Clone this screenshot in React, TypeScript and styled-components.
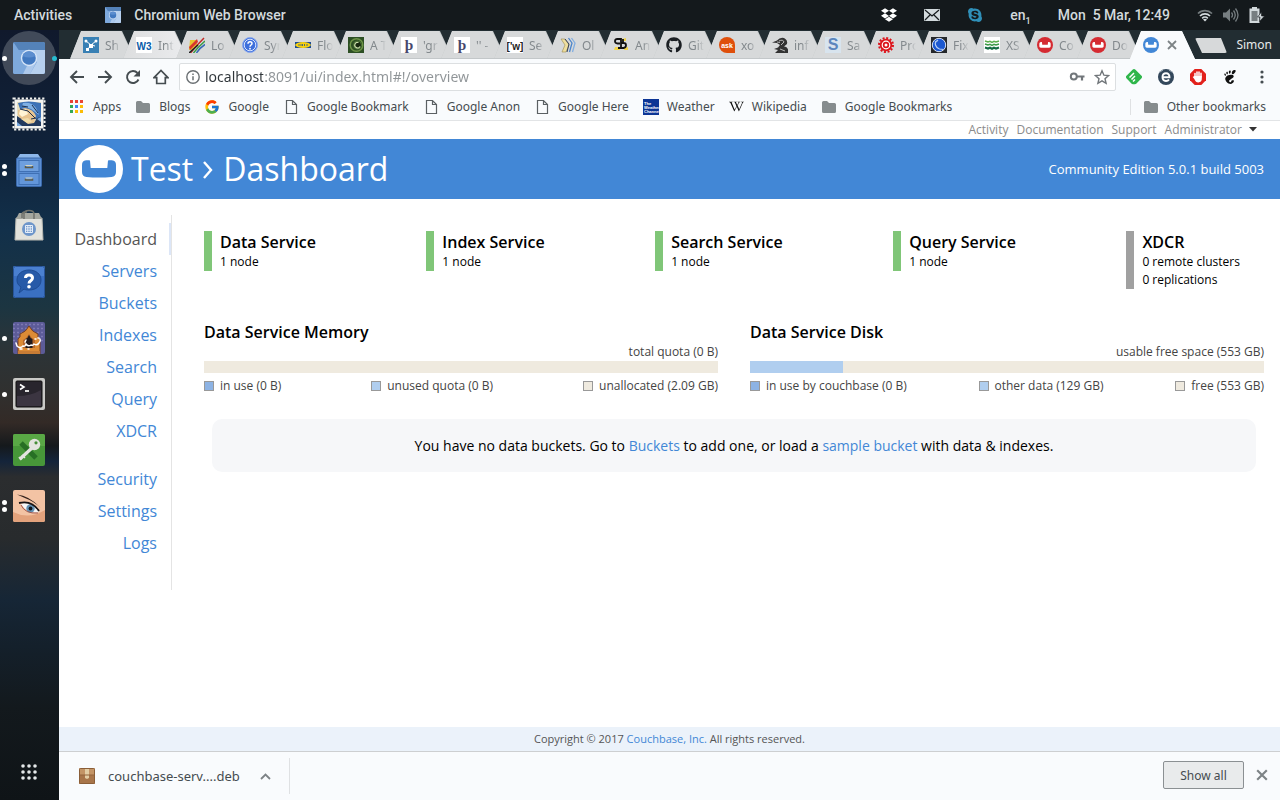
import React from "react";
import styled, { createGlobalStyle, css } from "styled-components";
import { FaDropbox, FaGithub, FaSkype, FaWikipediaW } from "react-icons/fa";
import { FcGoogle } from "react-icons/fc";
import { SiGnome } from "react-icons/si";

const ui = '"Noto Sans", "Open Sans", sans-serif';
const page = '"Open Sans", "Noto Sans", sans-serif';
const blue = "#4287d6";

const GlobalStyle = createGlobalStyle`
  *, *::before { box-sizing: border-box; }
  body { margin: 0; background: #fff; }
  button { border: 0; padding: 0; background: none; font: inherit; color: inherit; cursor: pointer; }
  a { color: inherit; text-decoration: none; }
  h1, h2, p, ul { margin: 0; padding: 0; }
  ul { list-style: none; }
  svg { display: block; flex: none; }
`;

/* ---------- desktop ---------- */

const Desktop = styled.div`
  display: flex;
  flex-direction: column;
  min-height: 100vh;
  font-family: ${ui};
`;

const TopBar = styled.header`
  display: flex;
  align-items: center;
  height: 30px;
  padding: 0 15px 0 14px;
  background: #14191c;
  color: #d3dadd;
  font: 500 14px/30px Roboto, sans-serif;
  white-space: nowrap;
`;

const AppMenu = styled.button`
  display: flex;
  align-items: center;
  gap: 13px;
  margin-left: 33px;
`;

const Tray = styled.div`
  display: flex;
  align-items: center;
  gap: 27px;
  margin-left: auto;
`;

const Status = styled.button`
  display: flex;
  gap: 10px;
`;

const Sub = styled.sub`
  font-size: 9px;
  line-height: 8px;
`;

const Below = styled.div`
  display: flex;
  flex: 1;
`;

const Dock = styled.nav`
  display: flex;
  flex: none;
  flex-direction: column;
  width: 59px;
  background: linear-gradient(
    #10192c 0%, #10233b 16%, #12304a 26%, #1c3541 36%, #2b3438 41%, #30302f 47%,
    #332a26 51%, #15191c 54%, #14243a 56%, #2b2d2f 58%, #282b2d 66%, #162636 74%,
    #14202b 80%, #13191d 88%, #0f1417 100%
  );
`;

const DockButton = styled.button<{ $last?: boolean }>`
  position: relative;
  display: flex;
  align-items: center;
  justify-content: center;
  height: 56px;
  margin-top: ${(p) => (p.$last ? "auto" : "0")};
  padding-right: 2px;
`;

const Halo = styled.span`
  display: flex;
  align-items: center;
  justify-content: center;
  width: 54px;
  height: 54px;
  border-radius: 50%;
  background: #414a59;
`;

const Dots = styled.span<{ $side?: "right" }>`
  position: absolute;
  top: 0;
  bottom: 0;
  ${(p) => (p.$side === "right" ? "right: 2px;" : "left: 2px;")}
  display: flex;
  flex-direction: column;
  justify-content: center;
  gap: 2px;
`;

const Dot = styled.i<{ $cyan?: boolean }>`
  width: 5px;
  height: 5px;
  border-radius: 50%;
  background: ${(p) => (p.$cyan ? "#27bcd0" : "#fff")};
`;

/* ---------- browser ---------- */

const Browser = styled.div`
  display: flex;
  flex: 1;
  flex-direction: column;
  min-width: 0;
`;

const TabStrip = styled.div`
  display: flex;
  align-items: flex-end;
  height: 29px;
  padding: 0 8px 0 11px;
  background: #222d32;
`;

const slant = css`
  clip-path: polygon(0 100%, 11px 0, calc(100% - 13px) 0, 100% 100%);
`;

const Tab = styled.button<{ $state: "idle" | "hover" | "active" }>`
  position: relative;
  display: flex;
  flex: none;
  align-items: center;
  gap: ${(p) => (p.$state === "active" ? 8 : 6)}px;
  width: 65px;
  height: 28px;
  margin-right: -12px;
  padding-left: 13px;
  color: #83898d;
  font-size: 12px;
  ${slant}
  background: ${(p) => (p.$state === "active" ? "#f9fbfd" : "#c3c7c9")};
  z-index: ${(p) => (p.$state === "active" ? 2 : 1)};

  &::before {
    content: "";
    position: absolute;
    inset: 0 1px 1px 0;
    ${slant}
    background: ${(p) =>
      p.$state === "active" ? "#f9fbfd" : p.$state === "hover" ? "linear-gradient(90deg, #dddedf, #ebecee)" : "#d7d9da"};
    ${(p) => p.$state === "active" && "inset: 0;"}
  }

  > * { position: relative; }
`;

const TabTitle = styled.span`
  width: 16px;
  overflow: hidden;
  white-space: nowrap;
  text-align: left;
  mask-image: linear-gradient(90deg, #000 50%, transparent);
`;

const NewTab = styled.button`
  width: 32px;
  height: 15px;
  margin: 0 auto 6px 12px;
  background: #d7d9da;
  border-radius: 2px;
  clip-path: polygon(0 0, 26px 0, 100% 100%, 7px 100%);
`;

const Profile = styled.button`
  align-self: center;
  color: #e6e9ea;
  font-size: 12px;
`;

const Toolbar = styled.div`
  display: flex;
  align-items: center;
  height: 35px;
  padding: 1px 10px 0 10px;
  background: #f9fbfd;
`;

const ToolButton = styled.button<{ $wide?: boolean }>`
  display: flex;
  flex: none;
  justify-content: center;
  width: ${(p) => (p.$wide ? 32 : 28)}px;
  color: #454c50;
`;

const Tools = styled.div<{ $end?: boolean }>`
  display: flex;
  align-items: center;
  margin: ${(p) => (p.$end ? "0 -8px 0 2px" : "0 4px 0 -6px")};
`;

const Omnibox = styled.label`
  display: flex;
  flex: 1;
  align-items: center;
  gap: 4px;
  height: 28px;
  padding: 0 5px;
  border: 1px solid #dcdfe1;
  border-radius: 2px;
  background: #fff;
`;

const Url = styled.input`
  flex: 1;
  min-width: 0;
  padding: 0;
  border: 0;
  outline: 0;
  font: 14px/20px ${ui};
  color: transparent;
  background: linear-gradient(90deg, #30363a 58px, #8f9497 58px);
  background-clip: text;
`;

const OmniButton = styled.button`
  margin-left: 5px;
  color: #71767a;
`;

const Bookmarks = styled.div`
  display: flex;
  align-items: center;
  gap: 14px;
  height: 27px;
  padding: 0 14px 1px 10px;
  border-bottom: 1px solid #e2e4e6;
  background: #f9fbfd;
`;

const Bookmark = styled.a<{ $end?: boolean }>`
  display: flex;
  align-items: center;
  gap: 8px;
  color: #454c50;
  font-size: 12px;
  line-height: 16px;
  white-space: nowrap;
  ${(p) =>
    p.$end &&
    css`
      margin-left: auto;
      padding-left: 12px;
      border-left: 1px solid #dfe1e3;
    `}
`;

/* ---------- console ---------- */

const Console = styled.div`
  display: flex;
  flex: 1;
  flex-direction: column;
  background: #fff;
  color: #000;
  font-family: ${page};
`;

const UserLinks = styled.nav`
  display: flex;
  align-items: flex-start;
  justify-content: flex-end;
  gap: 8px;
  height: 18px;
  padding-right: 23px;
  color: #8b8b8b;
  font-size: 12px;
  line-height: 17px;
`;

const UserMenu = styled.button`
  display: flex;
  align-items: center;
  gap: 7px;
`;

const Banner = styled.header`
  display: flex;
  align-items: center;
  height: 60px;
  padding: 0 16px;
  background: ${blue};
  color: #fff;
`;

const Title = styled.h1`
  display: flex;
  align-items: center;
  gap: 9px;
  margin-left: 8px;
  font-size: 32px;
  font-weight: 400;
  line-height: 48px;
`;

const Version = styled.span`
  margin-left: auto;
  font-size: 13px;
`;

const Body = styled.div`
  display: flex;
  flex: 1;
  align-items: flex-start;
`;

const SideNav = styled.nav`
  display: flex;
  flex: none;
  flex-direction: column;
  width: 113px;
  margin-top: 16px;
  padding: 8px 0 31px;
  border-right: 1px solid #e4e4e4;
`;

const SideGroup = styled.ul`
  & + & { margin-top: 16px; }
`;

const SideLink = styled.a<{ $active?: boolean }>`
  display: block;
  padding-right: ${(p) => (p.$active ? 12 : 14)}px;
  border-right: ${(p) => (p.$active ? "2px solid #dce6f7" : "0")};
  color: ${(p) => (p.$active ? "#555" : blue)};
  font-size: 16px;
  line-height: 32px;
  text-align: right;
`;

const Main = styled.main`
  flex: 1;
  min-width: 0;
  padding: 32px 16px 32px 32px;
`;

const Services = styled.section`
  display: flex;
  align-items: flex-start;
  justify-content: space-between;
  padding-right: 24px;
`;

const Service = styled.div<{ $off?: boolean }>`
  padding-left: 8px;
  border-left: 8px solid ${(p) => (p.$off ? "#a0a0a0" : "#80c678")};
  font-size: 12px;
  line-height: 18px;
`;

const Heading = styled.h2`
  font-size: 16px;
  font-weight: 600;
  line-height: 22px;
`;

const Usages = styled.section`
  display: grid;
  grid-template-columns: 1fr 1fr;
  gap: 32px;
  margin-top: 32px;
`;

const Total = styled.p`
  color: #444;
  font-size: 12px;
  line-height: 18px;
  text-align: right;
`;

const Meter = styled.div`
  height: 12px;
  background: #efeadf;
`;

const Fill = styled.div`
  height: 100%;
  background: #b0ceef;
`;

const Legend = styled.ul`
  display: flex;
  justify-content: space-between;
  padding-top: 4px;
  color: #444;
  font-size: 12px;
  line-height: 18px;
`;

const Key = styled.li<{ $color: string }>`
  display: flex;
  align-items: center;
  gap: 6px;

  &::before {
    content: "";
    width: 10px;
    height: 10px;
    border: 1px solid #999;
    background: ${(p) => p.$color};
  }
`;

const Notice = styled.p`
  margin: 24px 8px 0;
  padding: 16px;
  border-radius: 10px;
  background: #f6f7f9;
  font-size: 14px;
  line-height: 21px;
  text-align: center;
`;

const Link = styled.a`
  color: ${blue};
`;

const Footer = styled.footer`
  height: 24px;
  background: #ebf2fa;
  color: #555;
  font-size: 11px;
  line-height: 24px;
  text-align: center;
`;

/* ---------- download shelf ---------- */

const Shelf = styled.div`
  display: flex;
  align-items: center;
  height: 49px;
  padding: 0 12px 0 20px;
  border-top: 1px solid #cdcfd1;
  background: #f9fbfd;
  color: #454c50;
`;

const Download = styled.div`
  display: flex;
  align-items: center;
  gap: 20px;
  height: 36px;
  padding-right: 18px;
  border-right: 1px solid #dfe1e3;
`;

const FileButton = styled.button`
  display: flex;
  align-items: center;
  gap: 13px;
  font-size: 13px;
`;

const ShowAll = styled.button`
  width: 81px;
  height: 28px;
  margin: 0 12px 2px auto;
  border: 1px solid #8b9093;
  border-radius: 2px;
  background: #e9ebec;
  font-size: 12px;
`;

const CloseShelf = styled.button`
  margin-bottom: 2px;
`;

/* ---------- drawings ---------- */

const Svg = ({ s = 16, v = 16, children }: { s?: number; v?: number; children: React.ReactNode }) => (
  <svg width={s} height={s} viewBox={`0 0 ${v} ${v}`} fill="none" aria-hidden="true">
    {children}
  </svg>
);

const Chromium = ({ s }: { s: number }) => (
  <Svg s={s} v={32}>
    <rect width="32" height="32" rx="2" fill="#79a5dc" />
    <path d="M2 0H30Q32 0 32 2V8H0V2Q0 0 2 0Z" fill="#5482b9" />
    <path d="M0 3Q0 1 1 1L9 13l8 19H2Q0 32 0 30Z" fill="#7ea9dc" />
    <path d="M16 8H32V30Q32 32 30 32H17L24 20Z" fill="#b7d0ee" />
    <path d="M24 19 17 32H10L14 24Z" fill="#cfe0f5" opacity=".6" />
    <circle cx="16" cy="16" r="8.200" fill="#d6e5f8" />
    <circle cx="16" cy="16" r="6.800" fill="#4279c0" />
    <path d="M9.500 14a7 7 0 0 1 13 0q-6.500 3-13 0Z" fill="#5c8ecf" />
  </Svg>
);

const CouchLogo = ({ s, bg, fg }: { s: number; bg: string; fg: string }) => (
  <Svg s={s} v={48}>
    <circle cx="24" cy="24" r="24" fill={bg} />
    <path
      d="M10 15.500c2-.4 3.700-.4 5 0l.7 7.500h16.600l.7-7.500c1.300-.4 3-.4 5 0 2 .4 3 2 3 4.500v7c0 3-1.500 4.600-4.500 5-8 .7-17 .7-25 0-3-.4-4.500-2-4.500-5v-7c0-2.500 1-4.100 3-4.500Z"
      fill={fg}
    />
  </Svg>
);

const Stamp = () => (
  <Svg s={34} v={34}>
    <rect x="2.500" y="2.500" width="29" height="29" fill="#f3f3f0" />
    <rect x="1.500" y="1.500" width="31" height="31" stroke="#f3f3f0" strokeWidth="2" strokeDasharray="2.200 1.900" />
    <rect x="5" y="5" width="24" height="24" fill="#e6dfc0" />
    <path d="M6 6q10-3 23 0v18l-6-2-3-7-12-3Z" fill="#3d72b6" />
    <path d="M11 6q9-1 13 5l3 7-8-6-9-3Z" fill="#7fb0e4" />
    <path d="m6 13 7-2q8 1 11 8l-2 7-6 1-7-4-3-5Z" fill="#e8c590" />
    <path d="m8 13 6-1 2 5-6 3-3-3Z" fill="#fff4d4" />
    <path d="m5 19 6 4 5 4 6-1 3-5 4-1v9H5Z" fill="#223a5e" />
    <path d="m9 22 6 4 5-1-4-4Z" fill="#f0dca8" />
    <path d="m8 12 8 2 7 7M20 8l6 8M10 9l6 1m3 12 5-1" stroke="#1c2f4d" />
    <path d="m5 25 5 4H5Zm20-3 4-2v5Z" fill="#7aa9dc" />
  </Svg>
);

const Cabinet = () => (
  <Svg s={34} v={34}>
    <path d="M5 5.500 8 1h18l3 4.500Z" fill="#8db7ea" />
    <rect x="4.500" y="5" width="25" height="28.500" rx="1" fill="#5b8ed3" stroke="#3a68aa" />
    <rect x="7" y="7.500" width="20" height="11" fill="#6e9fde" stroke="#3f70b4" />
    <rect x="7" y="20.500" width="20" height="11" fill="#6396da" stroke="#3f70b4" />
    <path d="M13.500 13v1.500h7V13m-7 12.500V27h7v-1.500" stroke="#5d5b48" strokeWidth="1.500" />
    <path d="M13.500 12.500h7m-7 12.500h7" stroke="#d8d4bb" />
  </Svg>
);

const Bag = () => (
  <Svg s={34} v={34}>
    <path d="M4 9h26l1 22H3Z" fill="#e2e2dc" stroke="#b9b9b2" />
    <path d="M7 4h20l3 6H4Z" fill="#a5a79f" />
    <path d="M12 10V5q0-3.500 5-3.500T22 5v5M10 9V5q1-3 5-2" stroke="#70726c" strokeWidth="1.500" />
    <circle cx="17" cy="20" r="7" fill="#6e96ca" />
    <path d="M13.500 16.500h7v7h-7Zm0 2.300h7m-7 2.400h7m-4.700-4.700v7m2.400-7v7" stroke="#e6eef8" />
  </Svg>
);

const Help = () => (
  <Svg s={32} v={32}>
    <rect width="32" height="32" rx="2" fill="#3a70c2" />
    <path d="M2 0h28q2 0 2 2v8H0V2q0-2 2-2Z" fill="#4a80d0" />
    <rect x=".5" y=".5" width="31" height="31" rx="2" stroke="#285499" />
    <path d="M16 4c7 0 12 4 12 10s-5 10-12 10c-2 0-3 0-5-1l-5 4 2-6c-3-2-4-4-4-7C4 8 9 4 16 4Z" fill="#275aa8" stroke="#1f4c93" />
    <path d="M12.500 12c0-4 7-4 7 0 0 3-3.500 2.500-3.500 5.500" stroke="#fff" strokeWidth="3" />
    <circle cx="16" cy="20.700" r="1.800" fill="#fff" />
  </Svg>
);

const Mosque = () => (
  <Svg s={32} v={32}>
    <rect width="32" height="32" rx="2" fill="#5c5b98" />
    <path d="M0 2.500h32M0 6.500h32M0 10.500h32M0 14.500h32M0 18.500h32" stroke="#7d79b3" strokeWidth="1.500" strokeDasharray="2 2" />
    <path d="M5 32V17q3-2 2-5 6-2 9-8 3 6 9 8-1 3 2 5v15Z" fill="#dc8b35" stroke="#784020" />
    <path d="M10 26v-8q4-2 6-6 2 4 6 6v8Z" fill="#b8682a" />
    <path d="M12.500 26v-9q2.500-1 3.500-4 1 3 3.500 4v9Z" fill="#231b1c" />
    <path d="M4 24q3 3 6 0 2 1 3-2 2 3 5 1 2 1 3-1 3 2 5-1 2-2 1-4M22 17h1m2-1h1M3 21l1 3m9-6-1 2M7 27h2m6 0h1" stroke="#fff" strokeWidth="1.500" strokeLinecap="round" />
    <path d="M5 29h22v3H5Z" fill="#c77c35" />
  </Svg>
);

const Terminal = () => (
  <Svg s={32} v={32}>
    <rect width="32" height="32" rx="2" fill="#c9c9c6" />
    <rect x="3" y="3" width="26" height="26" rx="1" fill="#28252d" stroke="#111" />
    <path d="M4 18q14 0 24-6v16H4Z" fill="#3b3541" />
    <path d="m7 6.500 4 2.500-4 2.500" stroke="#fff" strokeWidth="1.600" />
    <path d="M12 13h4" stroke="#ddd" strokeWidth="2" />
  </Svg>
);

const KeyApp = () => (
  <Svg s={32} v={32}>
    <rect width="32" height="32" rx="2" fill="#479739" />
    <path d="M0 2q0-2 2-2h28q2 0 2 2v10H0Z" fill="#59a845" />
    <path d="m8 9 15 15" stroke="#276f25" strokeWidth="5" />
    <path d="M20 13 7 25" stroke="#e3e3df" strokeWidth="3.200" />
    <path d="m9 21 3 3m-6-1 2 3" stroke="#e3e3df" strokeWidth="1.500" />
    <circle cx="21.500" cy="10.500" r="5.700" fill="#e3e3df" />
    <circle cx="23" cy="8.800" r="1.600" fill="#468d37" />
  </Svg>
);

const Eye = () => (
  <Svg s={32} v={32}>
    <rect width="32" height="32" rx="2" fill="#f3c3a4" />
    <path d="M0 22q16 8 32-2v10q0 2-2 2H2q-2 0-2-2Z" fill="#e3a27c" />
    <path d="M4 4.500q12 1 24 13.500-8-7-15-9.500Z" fill="#33211b" />
    <path d="M8 14q10-4 18 8-11 3-18-8Z" fill="#f5f7f8" />
    <circle cx="17.500" cy="18.500" r="4.200" fill="#6391b4" />
    <circle cx="17.500" cy="18.500" r="1.900" fill="#10171f" />
    <path d="M6 13q13-3 20 8" stroke="#171314" strokeWidth="1.800" />
    <path d="M8 15q4 9 17 8" stroke="#a0564b" />
  </Svg>
);

const AppGrid = () => (
  <Svg s={16} v={16}>
    {[2, 8, 14].map((y) => [2, 8, 14].map((x) => <circle key={`${x}-${y}`} cx={x} cy={y} r="1.800" fill="#e4e8e9" />))}
  </Svg>
);

const Letter = ({ bg, fg, children, size = 13, serif }: { bg: string; fg: string; children: string; size?: number; serif?: boolean }) => (
  <Svg>
    <rect width="16" height="16" fill={bg} />
    <text x="8" y="12.500" textAnchor="middle" fontSize={size} fontWeight="700" fill={fg} fontFamily={serif ? "Liberation Serif, serif" : "Liberation Sans, sans-serif"}>
      {children}
    </text>
  </Svg>
);

const Share = () => (
  <Svg>
    <rect width="16" height="16" fill="#3880b4" />
    <path d="m3 4 5 4 5-4M8 8l-3 4m3-4 4 1" stroke="#fff" />
    <circle cx="3" cy="4" r="1.500" fill="#fff" />
    <circle cx="13" cy="4" r="1.500" fill="#fff" />
    <path d="M6 7h4v4H6ZM3 11h3v3H3Z" fill="#fff" />
  </Svg>
);

const Rainbow = () => (
  <Svg>
    <path d="M1 3h7v5l-5 5H0Z" fill="#e8c530" />
    <path d="M0 10 8 2l1 3-8 8Z" fill="#d8362c" />
    <path d="M1.500 16Q7 9 15 1" stroke="#c42a25" strokeWidth="1.500" />
    <path d="M4.500 16Q9 10 16 4" stroke="#3a9b46" strokeWidth="1.500" />
    <path d="M7.500 16q3-5 8.500-8.500" stroke="#3867b5" strokeWidth="1.500" />
    <path d="M0 16 9 8" stroke="#222" strokeWidth="1.500" />
  </Svg>
);

const Question = () => (
  <Svg>
    <circle cx="8" cy="8" r="7.500" fill="#3e6fdc" stroke="#8ba9ec" />
    <circle cx="8" cy="8" r="5.800" stroke="#dce6fc" />
    <path d="M6 6.700c0-2.700 4-2.700 4-.2C10 8 8 8 8 9.700" stroke="#fff" strokeWidth="1.500" />
    <circle cx="8" cy="11.700" r=".9" fill="#fff" />
  </Svg>
);

const Ikea = () => (
  <Svg>
    <rect y="5" width="16" height="6" fill="#1c4b96" />
    <ellipse cx="8" cy="8" rx="7.800" ry="2.900" fill="#f9d20e" />
    <path d="M4 7v2M6 7v2m1.500-2v2M9.500 7v2M12 7v2" stroke="#1c4b96" strokeWidth=".8" />
  </Svg>
);

const Spiral = () => (
  <Svg>
    <rect width="16" height="16" fill="#2d4f24" />
    <circle cx="8.500" cy="8" r="6.300" stroke="#6d9347" strokeWidth="1.500" />
    <circle cx="9.500" cy="8" r="4" fill="#17280f" stroke="#4d7538" />
    <path d="M10.500 5.500A2.800 2.800 0 1 0 12 9.500" stroke="#c7dca8" strokeWidth="1.200" />
  </Svg>
);

const Waves = () => (
  <Svg>
    <path d="M1 2h4l4 6-3 7H2l3-7Z" fill="#efdf9f" stroke="#9c8a4e" strokeWidth=".6" />
    <path d="m5 2 4 5-2 8" stroke="#34405a" />
    <path d="m8.500 1 3.500 5-2.500 9" stroke="#4c85ca" strokeWidth="1.300" />
    <path d="m11.500 1 3.500 5-2.500 9" stroke="#83aee0" strokeWidth="1.300" />
  </Svg>
);

const Bee = () => (
  <Svg>
    <path d="M2 10h5v3H1ZM9 2l4-1v3H9Zm2 9 4-1v3h-4Z" fill="#f3d54a" />
    <path d="M7 6.500H4.500Q2 6.500 2 4.200T4.500 2H8v9M8 6h2.500q2.500 0 2.500 2.300T10.500 11H5M10 2v5" stroke="#111" strokeWidth="1.800" />
  </Svg>
);

const Ask = () => (
  <Svg>
    <path d="M8 0a8 8 0 0 1 8 8v8H8A8 8 0 0 1 8 0Z" fill="#df4f0b" />
    <text x="8" y="10.500" textAnchor="middle" fontSize="7" fontWeight="700" fill="#fff" fontFamily="Liberation Sans, sans-serif">
      ask
    </text>
  </Svg>
);

const Bird = () => (
  <Svg>
    <path d="m0 5.500 5-2Q8 0 12 1q4 2 3 6l-3 2.500q3 0 4 3V16H3l3-3-4-1 4-1.500L8 8 5 6Z" fill="#333" />
    <path d="M7 4q4-2 5 1l-3 3M8 12l5 2M5 5l3 .5" stroke="#b5b5b5" />
  </Svg>
);

const Gear = () => (
  <Svg>
    <circle cx="8" cy="8" r="7" stroke="#dc141b" strokeWidth="2" strokeDasharray="2 1.665" />
    <circle cx="8" cy="8" r="6.200" fill="#dc141b" />
    <circle cx="8" cy="8" r="3.800" stroke="#fff" strokeWidth="1.200" />
    <circle cx="8" cy="8" r="1.500" fill="#fff" />
  </Svg>
);

const Globe = () => (
  <Svg>
    <rect width="16" height="16" fill="#24272b" />
    <circle cx="8" cy="8" r="6.700" fill="#1c58d0" stroke="#d9e3f4" />
    <path d="M7 3Q3.500 5 4.500 8t4 4l4 .5M4 5l3-1.500" stroke="#b7cef3" strokeWidth="1.200" />
  </Svg>
);

const Layers = () => (
  <Svg>
    <rect width="16" height="16" fill="#fff" />
    <path d="m1 4 3 1 2-.7 2 1 2-1 2 .7 3-1" stroke="#5aae4c" strokeWidth="1.500" />
    <path d="m1 7 3 1 2-.7 2 1 2-1 2 .7 3-1" stroke="#3c9a46" strokeWidth="1.500" />
    <path d="m1 10.500 3 1 2-.7 2 1 2-1 2 .7 3-1" stroke="#146c42" strokeWidth="2.200" />
  </Svg>
);

const Folder = () => (
  <Svg>
    <path d="M1 3.500Q1 2 2.500 2H6l2 2h5.500Q15 4 15 5.500v7q0 1.500-1.500 1.500h-11Q1 14 1 12.500Z" fill="#868c8e" />
  </Svg>
);

const Doc = () => (
  <Svg>
    <path d="M3.500 1.500h6l4 4v9h-10Zm6 0v4h4" stroke="#5b6063" strokeWidth="1.200" />
  </Svg>
);

const Apps = () => (
  <Svg>
    {["#ea4335", "#ea4335", "#ea4335", "#34a853", "#4285f4", "#fbbc05", "#34a853", "#fbbc05", "#fbbc05"].map((c, i) => (
      <rect key={i} x={1 + (i % 3) * 5} y={1 + Math.floor(i / 3) * 5} width="3" height="3" fill={c} />
    ))}
  </Svg>
);

const Weather = () => (
  <Svg>
    <rect width="16" height="16" fill="#0c3595" />
    <g fontSize="4" fontWeight="700" fill="#fff" fontFamily="Liberation Sans, sans-serif">
      <text x="1" y="6">The</text>
      <text x="1" y="10">Weather</text>
      <text x="1" y="14">Channel</text>
    </g>
  </Svg>
);

const Box = () => (
  <Svg>
    <rect width="16" height="16" rx="1" fill="#c39466" />
    <path d="M0 7h16v8q0 1-1 1H1q-1 0-1-1Z" fill="#a8754a" />
    <path d="M6 0h4v10l-2 1-2-1Z" fill="#e3cda5" />
    <path d="M0 7h16" stroke="#93643c" />
    <rect x=".5" y=".5" width="15" height="15" rx="1" stroke="#8a5e38" />
  </Svg>
);

const Mail = () => (
  <Svg>
    <rect y="2" width="16" height="12" rx="1" fill="#d3dadd" />
    <path d="m1 3 7 6 7-6M1 13l5-5m9 5-5-5" stroke="#14191c" strokeWidth="1.200" />
  </Svg>
);

const Wifi = () => (
  <Svg>
    <path d="M1 6.500a10 10 0 0 1 14 0" stroke="#777e81" strokeWidth="1.700" />
    <path d="M3 9a7 7 0 0 1 10 0M5.200 11.300a4 4 0 0 1 5.600 0" stroke="#d3dadd" strokeWidth="1.700" />
    <path d="m8 14.500-2-2q2-1.500 4 0Z" fill="#d3dadd" />
  </Svg>
);

const Sound = () => (
  <Svg>
    <path d="M0 5.500h3l4-4v13l-4-4H0Z" fill="#777e81" />
    <path d="M8.500 5.500q2 2.500 0 5m2-7q3.500 4.500 0 9m2-11q5 6.500 0 13" stroke="#777e81" strokeWidth="1.300" />
  </Svg>
);

const Battery = () => (
  <Svg>
    <path d="M3 1.500V0h5v1.500h2.500V16H.5V1.500Z" fill="#d3dadd" />
    <path d="M2.500 4h6v10h-6Z" fill="#777e81" />
    <path d="m12.500 5-4 5h2.500l-.5 4.500 5-5.500h-3Z" fill="#d3dadd" stroke="#14191c" strokeWidth=".6" />
  </Svg>
);

const Feedly = () => (
  <Svg>
    <path d="M6.500.8q1.500-1.400 3 0l6 6q1.200 1.200 0 2.400l-5 5.300q-.6.7-1.600.7H7q-1 0-1.600-.7l-5-5.300Q-.7 8 .5 6.800Z" fill="#2fb64b" />
    <path d="M3.500 8.500 8 4m-2.500 6.500L9 7m-2 5.500 2-2" stroke="#fff" strokeWidth="1.500" />
  </Svg>
);

const Ghost = () => (
  <Svg>
    <circle cx="8" cy="8" r="8" fill="#33475b" />
    <path d="M4.500 8.300h7q0-4-3.500-4T4.500 8t3.500 4q2 0 3-1.500" stroke="#fff" strokeWidth="1.900" />
    <path d="M2 3 5 1M11 1l3 2" stroke="#a9b5bf" />
  </Svg>
);

const StopHand = () => (
  <Svg>
    <path d="M4.700 0h6.600L16 4.700v6.600L11.300 16H4.700L0 11.300V4.700Z" fill="#e2211c" />
    <path d="M5 8V4.500M7 7.500V3M9 7.500V3m2 5V4.300" stroke="#fff" strokeWidth="1.500" strokeLinecap="round" />
    <path d="M4.300 7h7.500v3q0 3-3.500 3.500-2.500 0-4-3.500L2.700 8Z" fill="#fff" />
  </Svg>
);

const Caret = () => (
  <svg width="8" height="5" viewBox="0 0 8 5" aria-hidden="true">
    <path d="M0 0h8L4 4.500Z" fill="#333" />
  </svg>
);

const Cross = ({ s = 10 }: { s?: number }) => (
  <Svg s={s} v={10}>
    <path d="m1 1 8 8m0-8-8 8" stroke="#7d8386" strokeWidth="1.800" />
  </Svg>
);

/* ---------- data ---------- */

const red = <CouchLogo s={16} bg="#d52b32" fg="#fff" />;

const tabs: [React.ReactNode, string][] = [
  [<Share />, "Sh"],
  [<Letter bg="#fff" fg="#0a5ca8" size={10}>W3</Letter>, "Int"],
  [<Rainbow />, "Lo"],
  [<Question />, "Syr"],
  [<Ikea />, "Flo"],
  [<Spiral />, "A T"],
  [<Letter bg="#fff" fg="#46476b" size={15} serif>þ</Letter>, "'gr"],
  [<Letter bg="#fff" fg="#46476b" size={15} serif>þ</Letter>, "'' -"],
  [<Letter bg="#fff" fg="#222" size={10}>['w]</Letter>, "Se"],
  [<Waves />, "Ol"],
  [<Bee />, "An"],
  [<FaGithub size={16} color="#1b1f23" />, "Git"],
  [<Ask />, "xo"],
  [<Bird />, "inf"],
  [<Letter bg="#d8e4ee" fg="#5b86bd" size={16}>S</Letter>, "Sa"],
  [<Gear />, "Pro"],
  [<Globe />, "Fix"],
  [<Layers />, "XS"],
  [red, "Co"],
  [red, "Do"],
];

const bookmarks: [React.ReactNode, string][] = [
  [<Apps />, "Apps"],
  [<Folder />, "Blogs"],
  [<FcGoogle size={16} />, "Google"],
  [<Doc />, "Google Bookmark"],
  [<Doc />, "Google Anon"],
  [<Doc />, "Google Here"],
  [<Weather />, "Weather"],
  [<FaWikipediaW size={15} color="#111" />, "Wikipedia"],
  [<Folder />, "Google Bookmarks"],
];

const dock: [React.ReactNode, string, number][] = [
  [<Stamp />, "Mail", 0],
  [<Cabinet />, "Files", 2],
  [<Bag />, "Software", 0],
  [<Help />, "Help", 0],
  [<Mosque />, "Hebbar", 1],
  [<Terminal />, "Terminal", 1],
  [<KeyApp />, "Passwords", 0],
  [<Eye />, "Image viewer", 2],
];

const services: [string, string[]][] = [
  ["Data Service", ["1 node"]],
  ["Index Service", ["1 node"]],
  ["Search Service", ["1 node"]],
  ["Query Service", ["1 node"]],
  ["XDCR", ["0 remote clusters", "0 replications"]],
];

const usages = [
  {
    title: "Data Service Memory",
    total: "total quota (0 B)",
    fill: 0,
    keys: ["in use (0 B)", "unused quota (0 B)", "unallocated (2.09 GB)"],
  },
  {
    title: "Data Service Disk",
    total: "usable free space (553 GB)",
    fill: 18,
    keys: ["in use by couchbase (0 B)", "other data (129 GB)", "free (553 GB)"],
  },
];

const keyColors = ["#8db3e4", "#b0ceef", "#efeadf"];

const sideNav = [
  ["Dashboard", "Servers", "Buckets", "Indexes", "Search", "Query", "XDCR"],
  ["Security", "Settings", "Logs"],
];

export default function App() {
  return (
    <Desktop>
      <GlobalStyle />
      <TopBar>
        <button>Activities</button>
        <AppMenu>
          <Chromium s={16} />
          Chromium Web Browser
        </AppMenu>
        <Tray>
          <FaDropbox size={16} color="#fff" />
          <Mail />
          <FaSkype size={16} color="#2f8fb8" />
          <button>
            en<Sub>1</Sub>
          </button>
          <button>Mon&nbsp; 5 Mar, 12:49</button>
          <Status aria-label="System">
            <Wifi />
            <Sound />
            <Battery />
          </Status>
        </Tray>
      </TopBar>
      <Below>
        <Dock aria-label="Dock">
          <DockButton aria-label="Chromium">
            <Halo>
              <Chromium s={32} />
            </Halo>
            <Dots>
              <Dot />
            </Dots>
            <Dots $side="right">
              <Dot $cyan />
            </Dots>
          </DockButton>
          {dock.map(([icon, name, count]) => (
            <DockButton key={name} aria-label={name}>
              {icon}
              <Dots>
                {Array.from({ length: count }, (_, i) => (
                  <Dot key={i} />
                ))}
              </Dots>
            </DockButton>
          ))}
          <DockButton $last aria-label="Show applications">
            <AppGrid />
          </DockButton>
        </Dock>
        <Browser>
          <TabStrip>
            {tabs.map(([icon, title], i) => (
              <Tab key={i} $state={i === 1 ? "hover" : "idle"}>
                {icon}
                <TabTitle>{title}</TabTitle>
              </Tab>
            ))}
            <Tab $state="active" aria-label="Couchbase console">
              <CouchLogo s={16} bg={blue} fg="#fff" />
              <Cross />
            </Tab>
            <NewTab aria-label="New tab" />
            <Profile>Simon</Profile>
          </TabStrip>
          <Toolbar>
            <Tools>
              <ToolButton aria-label="Back">
                <Svg><path d="M15 8H2m6-6L2 8l6 6" stroke="currentColor" strokeWidth="1.900" /></Svg>
              </ToolButton>
              <ToolButton aria-label="Forward">
                <Svg><path d="M1 8h13M8 2l6 6-6 6" stroke="currentColor" strokeWidth="1.900" /></Svg>
              </ToolButton>
              <ToolButton aria-label="Reload">
                <Svg>
                  <path d="M13.500 10.500a6 6 0 1 1-1-6.500" stroke="currentColor" strokeWidth="1.900" />
                  <path d="M15 1v6.500H8.500Z" fill="currentColor" />
                </Svg>
              </ToolButton>
              <ToolButton aria-label="Home">
                <Svg><path d="M1 8.700 8 1.500l7 7.200h-2.700v5.800H3.700V8.700Z" stroke="currentColor" strokeWidth="1.700" /></Svg>
              </ToolButton>
            </Tools>
            <Omnibox>
              <Svg>
                <circle cx="8" cy="8" r="6.200" stroke="#6b7073" strokeWidth="1.400" />
                <path d="M8 7.200v4M8 4.500V6" stroke="#6b7073" strokeWidth="1.500" />
              </Svg>
              <Url aria-label="Address" defaultValue="localhost:8091/ui/index.html#!/overview" />
              <OmniButton aria-label="Saved passwords">
                <Svg>
                  <circle cx="4.800" cy="7.500" r="3" stroke="currentColor" strokeWidth="2" />
                  <path d="M8 7.500h7.500M13 8v3.500" stroke="currentColor" strokeWidth="2.200" />
                </Svg>
              </OmniButton>
              <OmniButton aria-label="Bookmark this page">
                <Svg><path d="m8 1.800 1.900 4.400 4.700.4L11 9.700l1.100 4.600L8 11.900l-4.100 2.400L5 9.700 1.400 6.600l4.700-.4Z" stroke="currentColor" strokeWidth="1.400" /></Svg>
              </OmniButton>
            </Omnibox>
            <Tools $end>
              <ToolButton $wide aria-label="Feedly"><Feedly /></ToolButton>
              <ToolButton $wide aria-label="Privacy"><Ghost /></ToolButton>
              <ToolButton $wide aria-label="Ad blocker"><StopHand /></ToolButton>
              <ToolButton $wide aria-label="GNOME Shell"><SiGnome size={14} color="#111" /></ToolButton>
              <ToolButton $wide aria-label="Menu">
                <Svg>
                  <circle cx="8" cy="3" r="1.600" fill="currentColor" />
                  <circle cx="8" cy="8" r="1.600" fill="currentColor" />
                  <circle cx="8" cy="13" r="1.600" fill="currentColor" />
                </Svg>
              </ToolButton>
            </Tools>
          </Toolbar>
          <Bookmarks>
            {bookmarks.map(([icon, name]) => (
              <Bookmark key={name} href="#">
                {icon}
                {name}
              </Bookmark>
            ))}
            <Bookmark $end href="#">
              <Folder />
              Other bookmarks
            </Bookmark>
          </Bookmarks>

          <Console>
            <UserLinks>
              <a href="#">Activity</a>
              <a href="#">Documentation</a>
              <a href="#">Support</a>
              <UserMenu>
                Administrator
                <Caret />
              </UserMenu>
            </UserLinks>
            <Banner>
              <CouchLogo s={48} bg="#fff" fg={blue} />
              <Title>
                Test
                <svg width="12" height="20" viewBox="0 0 12 20" fill="none" aria-hidden="true">
                  <path d="m2 3 7 8-7 8" stroke="#fff" strokeWidth="2.400" />
                </svg>
                Dashboard
              </Title>
              <Version>Community Edition 5.0.1 build 5003</Version>
            </Banner>
            <Body>
              <SideNav>
                {sideNav.map((group, g) => (
                  <SideGroup key={g}>
                    {group.map((name) => (
                      <li key={name}>
                        <SideLink href="#" $active={name === "Dashboard"}>
                          {name}
                        </SideLink>
                      </li>
                    ))}
                  </SideGroup>
                ))}
              </SideNav>
              <Main>
                <Services>
                  {services.map(([name, lines]) => (
                    <Service key={name} $off={name === "XDCR"}>
                      <Heading>{name}</Heading>
                      {lines.map((line) => (
                        <p key={line}>{line}</p>
                      ))}
                    </Service>
                  ))}
                </Services>
                <Usages>
                  {usages.map((u) => (
                    <div key={u.title}>
                      <Heading>{u.title}</Heading>
                      <Total>{u.total}</Total>
                      <Meter>
                        <Fill style={{ width: `${u.fill}%` }} />
                      </Meter>
                      <Legend>
                        {u.keys.map((k, i) => (
                          <Key key={k} $color={keyColors[i]}>
                            {k}
                          </Key>
                        ))}
                      </Legend>
                    </div>
                  ))}
                </Usages>
                <Notice>
                  You have no data buckets. Go to <Link href="#">Buckets</Link> to add one, or load a{" "}
                  <Link href="#">sample bucket</Link> with data &amp; indexes.
                </Notice>
              </Main>
            </Body>
            <Footer>
              Copyright © 2017 <Link href="#">Couchbase, Inc.</Link> All rights reserved.
            </Footer>
          </Console>

          <Shelf>
            <Download>
              <FileButton>
                <Box />
                couchbase-serv....deb
              </FileButton>
              <button aria-label="Download options">
                <svg width="11" height="7" viewBox="0 0 11 7" fill="none" aria-hidden="true">
                  <path d="m1 6 4.500-4.500L10 6" stroke="#7d8386" strokeWidth="1.800" />
                </svg>
              </button>
            </Download>
            <ShowAll>Show all</ShowAll>
            <CloseShelf aria-label="Close downloads">
              <Cross s={12} />
            </CloseShelf>
          </Shelf>
        </Browser>
      </Below>
    </Desktop>
  );
}
